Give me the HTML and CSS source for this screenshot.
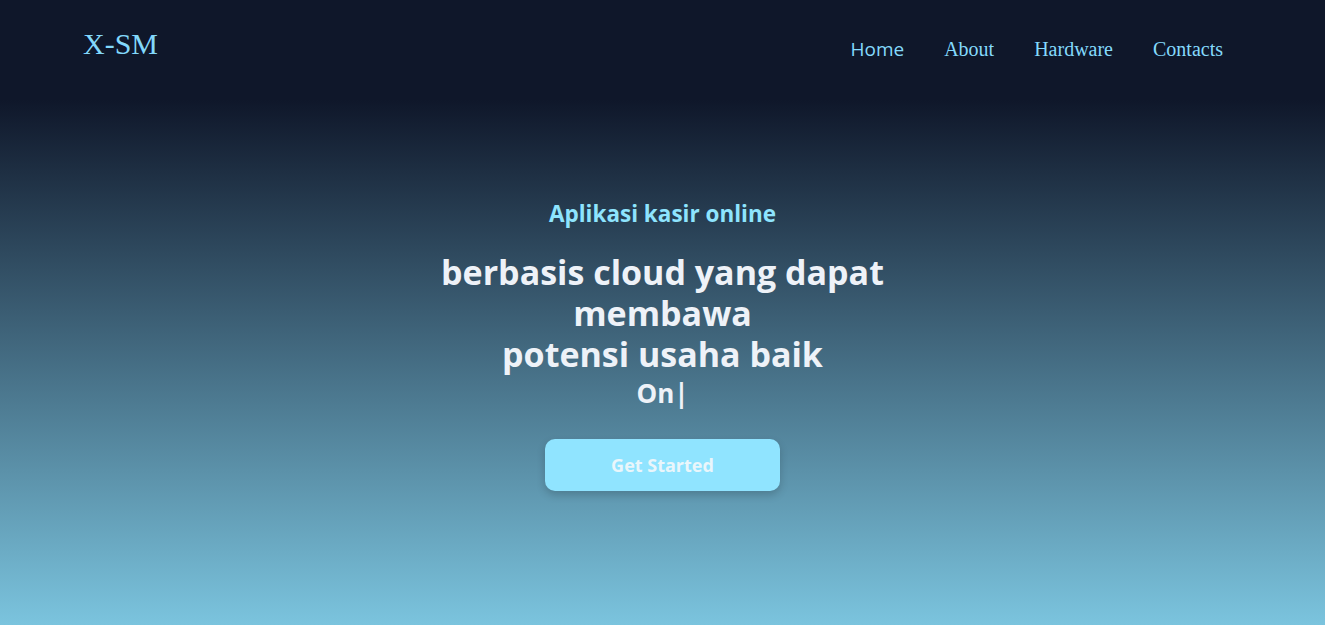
FILE: index.html
```html
<!DOCTYPE html>
<html lang="id">
<head>
<meta charset="utf-8">
<title>X-SM</title>
<link rel="stylesheet" href="styles.css">
</head>
<body>
<header class="topbar">
  <div class="logo">X-SM</div>
  <nav class="nav">
    <a class="nav-link nav-home" href="#">Home</a>
    <a class="nav-link" href="#">About</a>
    <a class="nav-link" href="#">Hardware</a>
    <a class="nav-link" href="#">Contacts</a>
  </nav>
</header>
<main class="hero">
  <p class="eyebrow">Aplikasi kasir online</p>
  <h1 class="headline">berbasis cloud yang dapat<br>membawa<br>potensi usaha baik</h1>
  <p class="typed">On|</p>
  <a class="cta" href="#">Get Started</a>
</main>
</body>
</html>
```
FILE: styles.css
```css
* { box-sizing: border-box; }
html, body { margin: 0; padding: 0; }
body {
  width: 1325px;
  height: 625px;
  overflow: hidden;
  background: #0f172a;
  font-family: "Open Sans", "Noto Sans", sans-serif;
}
.topbar {
  height: 100px;
  background: #0f172a;
  display: flex;
  justify-content: space-between;
  align-items: flex-start;
  padding: 25px 102px 0 83px;
}
.logo {
  font-family: "Liberation Serif", serif;
  font-size: 30px;
  color: #82d8fb;
  line-height: 38px;
}
.nav {
  display: flex;
  gap: 40px;
  padding-top: 10px;
  align-items: baseline;
}
.nav-link {
  font-family: "Liberation Serif", serif;
  font-size: 20px;
  color: #84dafc;
  text-decoration: none;
  line-height: 28px;
}
.nav-home {
  font-family: "Open Sans", sans-serif;
  font-size: 19px;
}
.hero {
  height: 525px;
  background: linear-gradient(to bottom, #0f172a 0%, #7bc4de 100%);
  display: flex;
  flex-direction: column;
  align-items: center;
  padding-top: 98px;
  text-align: center;
}
.eyebrow {
  margin: 0;
  font-size: 22.5px;
  font-weight: 700;
  color: #8ee4fe;
  line-height: 32px;
}
.headline {
  margin: 22px 0 0;
  font-size: 34px;
  font-weight: 700;
  color: #eef2f8;
  line-height: 41px;
}
.typed {
  margin: 0;
  font-size: 26px;
  font-weight: 700;
  color: #eef2f8;
  line-height: 36px;
}
.cta {
  margin-top: 28px;
  width: 235px;
  height: 52px;
  border-radius: 10px;
  background: #90e4ff;
  color: #eaf6fb;
  font-size: 18px;
  font-weight: 700;
  text-decoration: none;
  display: flex;
  align-items: center;
  justify-content: center;
  box-shadow: 0 4px 8px rgba(0,0,0,0.18);
}
```
